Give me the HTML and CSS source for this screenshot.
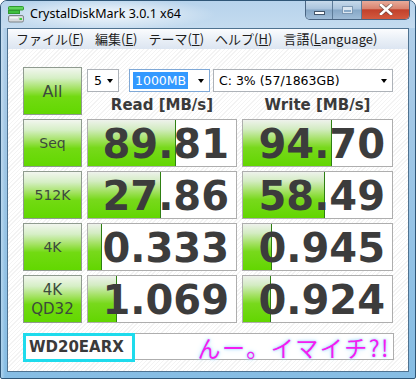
FILE: index.html
```html
<!DOCTYPE html>
<html lang="ja">
<head>
<meta charset="utf-8">
<title>CrystalDiskMark 3.0.1 x64</title>
<link rel="stylesheet" href="styles.css">
</head>
<body>
<div class="window">
  <div class="titlebar">
    <svg class="app-icon" width="16" height="17" viewBox="0 0 16 17">
      <rect x="0.5" y="0.5" width="15" height="3.5" rx="1" fill="#5fd45a" stroke="#2f9a2f" stroke-width="1"/>
      <rect x="0.5" y="4.5" width="11" height="3" fill="#3fbf3f" stroke="#2f9a2f" stroke-width="1"/>
      <rect x="0.5" y="9.5" width="15" height="6.5" rx="1.5" fill="#d6d9dc" stroke="#7d8388" stroke-width="1"/>
      <rect x="2" y="11" width="8" height="1.5" fill="#f4f5f6"/>
      <rect x="11.5" y="12" width="2.5" height="2" fill="#3fcf3f"/>
    </svg>
    <span class="title">CrystalDiskMark 3.0.1 x64</span>
    <div class="caption">
      <div class="cbtn cbtn-min"><span class="glyph-min"></span></div>
      <div class="cbtn cbtn-max"><span class="glyph-max"></span></div>
      <div class="cbtn cbtn-close">
        <svg width="14" height="11" viewBox="0 0 14 11">
          <path d="M2 1 L12 10 M12 1 L2 10" stroke="#3d3d3d" stroke-width="4.2" stroke-linecap="square" fill="none" opacity="0.55"/>
          <path d="M2 1 L12 10 M12 1 L2 10" stroke="#ffffff" stroke-width="2.6" stroke-linecap="square" fill="none"/>
        </svg>
      </div>
    </div>
  </div>
  <div class="client">
    <div class="menubar">
      <span class="menu-item">ファイル(<u>F</u>)</span>
      <span class="menu-item">編集(<u>E</u>)</span>
      <span class="menu-item">テーマ(<u>T</u>)</span>
      <span class="menu-item">ヘルプ(<u>H</u>)</span>
      <span class="menu-item">言語(<u>L</u>anguage)</span>
    </div>
    <div class="panel">
      <div class="grid">
        <div class="gbtn gbtn-all">All</div>
        <div class="selects">
          <div class="select sel-count"><span class="sel-text">5</span><span class="arrow"></span></div>
          <div class="select sel-size focused"><span class="sel-text selected">1000MB</span><span class="arrow"></span></div>
          <div class="select sel-drive"><span class="sel-text">C: 3% (57/1863GB)</span><span class="arrow"></span></div>
        </div>
        <div class="head">Read [MB/s]</div>
        <div class="head">Write [MB/s]</div>

        <div class="gbtn">Seq</div>
        <div class="val"><div class="bar" style="width:88px"></div><span class="num">89.81</span></div>
        <div class="val"><div class="bar" style="width:89px"></div><span class="num">94.70</span></div>

        <div class="gbtn">512K</div>
        <div class="val"><div class="bar" style="width:73px"></div><span class="num">27.86</span></div>
        <div class="val"><div class="bar" style="width:82px"></div><span class="num">58.49</span></div>

        <div class="gbtn">4K</div>
        <div class="val"><div class="bar" style="width:14px"></div><span class="num">0.333</span></div>
        <div class="val"><div class="bar" style="width:29px"></div><span class="num">0.945</span></div>

        <div class="gbtn gbtn-two">4K<br>QD32</div>
        <div class="val"><div class="bar" style="width:29px"></div><span class="num">1.069</span></div>
        <div class="val"><div class="bar" style="width:28px"></div><span class="num">0.924</span></div>
      </div>
      <div class="comment">
        <span class="model">WD20EARX</span>
        <span class="remark">んー。イマイチ?!</span>
      </div>
    </div>
  </div>
</div>
</body>
</html>
```
FILE: styles.css
```css
* { box-sizing: border-box; }
html, body { margin: 0; padding: 0; background: #ffffff; }

.window {
  width: 416px;
  height: 379px;
  border: 1px solid #2f5677;
  border-radius: 7px 7px 2px 2px;
  background:
    linear-gradient(to right, rgba(255,255,255,0.35) 0, rgba(255,255,255,0) 4px),
    linear-gradient(to bottom, #b4d1ea 0%, #a3c8e6 30%, #86bde4 100%);
  padding: 0 6px 6px 6px;
  display: flex;
  flex-direction: column;
  overflow: hidden;
}

/* ---------- title bar ---------- */
.titlebar {
  height: 27px;
  margin: 0 -6px;
  padding-left: 7px;
  display: flex;
  align-items: flex-start;
  background:
    radial-gradient(ellipse 110px 16px at 105px 13px, rgba(255,255,255,0.85), rgba(255,255,255,0) 100%),
    linear-gradient(to bottom, #b7d3ec 0%, #c4dbef 100%);
}
.app-icon { margin-top: 5px; flex: none; }
.title {
  margin-left: 6px;
  margin-top: 5px;
  font-family: "Noto Sans", "DejaVu Sans", sans-serif;
  font-size: 12.5px;
  line-height: 16px;
  color: #000;
}
.caption {
  margin-left: auto;
  margin-right: 5px;
  margin-top: -1px;
  display: flex;
  height: 20px;
  border: 1px solid #4a6582;
  border-top: none;
  border-radius: 0 0 5px 5px;
  overflow: hidden;
}
.cbtn {
  height: 19px;
  display: flex;
  align-items: center;
  justify-content: center;
}
.cbtn-min, .cbtn-max {
  background: linear-gradient(to bottom, #cadcec 0%, #a9c3dc 48%, #86a7c6 52%, #9fbcd7 100%);
  border-right: 1px solid #5d7b98;
}
.cbtn-min { width: 27px; }
.cbtn-max { width: 29px; }
.cbtn-close {
  width: 47px;
  background: linear-gradient(to bottom, #eab0a0 0%, #d98470 45%, #c2412b 52%, #d35a3f 100%);
}
.glyph-min {
  display: block;
  width: 11px;
  height: 4px;
  margin-top: 6px;
  background: #fff;
  border: 1px solid #44566a;
}
.glyph-max {
  display: block;
  width: 11px;
  height: 8px;
  border: 1px solid #7d98b3;
  box-shadow: inset 0 0 0 1px #dbe6f0, inset 0 2px 0 1px #dbe6f0;
}

/* ---------- client ---------- */
.client {
  flex: 1;
  border: 1px solid #4f7290;
  background:
    repeating-linear-gradient(135deg, #ffffff 0 2px, #f3f3f3 2px 3px);
  display: flex;
  flex-direction: column;
}
.menubar {
  height: 20px;
  display: flex;
  align-items: center;
  padding-left: 8px;
  background: linear-gradient(to bottom, #fbfcfe 0%, #eaf0f7 50%, #dce5f1 100%);
  font-family: "Noto Sans CJK JP", "Noto Sans", sans-serif;
  font-size: 13px;
  color: #1e1e1e;
}
.menu-item { margin-right: 11px; line-height: 18px; }
.menu-item u { text-decoration: underline; text-underline-offset: 1px; }

.panel {
  padding: 18px 0 0 15px;
}
.grid {
  display: grid;
  grid-template-columns: 59px 150px 151px;
  grid-template-rows: 25px 19px repeat(4, 48px);
  column-gap: 5px;
  row-gap: 4px;
}

.gbtn {
  border: 1px solid #8f9b8f;
  background: linear-gradient(to bottom, #f2f6ef 0%, #d6efc6 22%, #a2e260 45%, #72da12 62%, #62d800 100%);
  display: flex;
  align-items: center;
  justify-content: center;
  text-align: center;
  font-family: "DejaVu Sans", sans-serif;
  font-size: 14px;
  line-height: 17px;
  color: #3c4a3c;
}
.gbtn-all {
  grid-row: 1 / 3;
  font-size: 16px;
}
.gbtn-two { font-size: 15px; line-height: 19px; padding-top: 1px; }

.selects {
  grid-column: 2 / 4;
  display: flex;
  align-items: flex-start;
  padding-top: 2px;
}
.select {
  height: 23px;
  border: 1px solid #adb2b8;
  background: #fff;
  display: flex;
  align-items: center;
  font-family: "DejaVu Sans", sans-serif;
  font-size: 12.5px;
  color: #000;
  position: relative;
}
.sel-count { width: 32px; padding-left: 5px; }
.sel-size { width: 81px; margin-left: 10px; padding-left: 3px; border-color: #7fa8d6; }
.sel-drive { width: 180px; margin-left: 3px; padding-left: 4px; }
.sel-text { line-height: 17px; padding: 0 1px; }
.selected { background: #3399ff; color: #fff; padding: 0 2px; }
.arrow {
  margin-left: auto;
  margin-right: 5px;
  width: 0;
  height: 0;
  border-left: 3.5px solid transparent;
  border-right: 3.5px solid transparent;
  border-top: 4px solid #000;
}

.head {
  text-align: center;
  font-family: "DejaVu Sans", sans-serif;
  font-weight: bold;
  font-size: 15px;
  line-height: 19px;
  color: #3a3a3a;
}

.val {
  position: relative;
  border: 1px solid #aeaeae;
  background: #fff;
  overflow: hidden;
  display: flex;
  align-items: center;
  justify-content: flex-end;
  padding-right: 7px;
}
.bar {
  position: absolute;
  left: 0;
  top: 0;
  bottom: 0;
  border-right: 1px solid #2e7f12;
  background: linear-gradient(to bottom, #eef2ec 0%, #d3ecc2 20%, #a3e163 42%, #78d91c 60%, #62d600 100%);
}
.num {
  position: relative;
  font-family: "DejaVu Sans", sans-serif;
  font-weight: bold;
  font-size: 40px;
  line-height: 46px;
  color: #3c3c3c;
  margin-top: 2px;
}

.comment {
  margin-top: 10px;
  width: 371px;
  height: 27px;
  border: 1px solid #aeaeae;
  background: #fff;
  display: flex;
  align-items: center;
}
.model {
  align-self: flex-start;
  margin: -1px 0 -3px -1px;
  height: 29px;
  width: 112px;
  border: 3px solid #1edbec;
  padding-left: 3px;
  font-family: "DejaVu Sans", sans-serif;
  font-weight: bold;
  font-size: 15px;
  line-height: 23px;
  color: #3a3a3a;
  background: #fff;
}
.remark {
  margin-left: auto;
  margin-right: 3px;
  font-family: "Noto Sans CJK JP", sans-serif;
  font-weight: 400;
  font-size: 23px;
  letter-spacing: 1.5px;
  line-height: 24px;
  color: #f41cf0;
  text-shadow: 0 0 3px #a9dcff, 0 0 6px #c6e8ff, 0 0 2px #b7e1ff;
}
```
